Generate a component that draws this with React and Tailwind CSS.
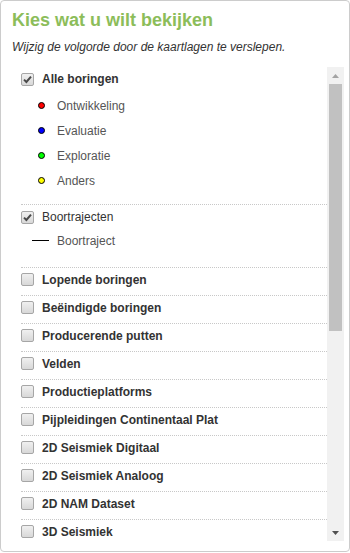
import React from "react";

function Checkbox({ checked }) {
  return (
    <span className="relative flex h-[13px] w-[13px] shrink-0 items-center justify-center rounded-[2px] border border-[#a6a6a6] bg-gradient-to-b from-[#f0f0f0] to-[#d8d8d8]">
      {checked && (
        <svg width="9" height="9" viewBox="0 0 9 9" className="block">
          <path d="M1 4.6 L3.4 7 L8 1.6" fill="none" stroke="#4a4a4a" strokeWidth="2" />
        </svg>
      )}
    </span>
  );
}

function Dot({ color }) {
  return <span className={`block h-[7px] w-[7px] shrink-0 rounded-full border border-black ${color}`} />;
}

const plain = [
  "Lopende boringen",
  "Beëindigde boringen",
  "Producerende putten",
  "Velden",
  "Productieplatforms",
  "Pijpleidingen Continentaal Plat",
  "2D Seismiek Digitaal",
  "2D Seismiek Analoog",
  "2D NAM Dataset",
  "3D Seismiek",
];

export default function App() {
  return (
    <div className="h-[552px] w-[350px] overflow-hidden rounded-[4px] border border-[#cccccc] bg-white pl-[11px] pr-[5px] pt-[9px] font-['Liberation_Sans',Arial,sans-serif]">
      <h1 className="text-[18px] font-bold leading-[20px] text-[#8cbd5a]">Kies wat u wilt bekijken</h1>
      <p className="mt-[9px] text-[12px] italic leading-[16px] text-[#333]">
        Wijzig de volgorde door de kaartlagen te verslepen.
      </p>
      <div className="mt-[12px] flex h-[474px]">
        <div className="h-full flex-1 overflow-hidden pl-[9px] pr-0">
          <ul className="w-full">
            <li>
              <div className="flex h-[23px] items-center gap-[8px] pt-[1px]">
                <Checkbox checked />
                <span className="text-[12px] font-bold text-[#333]">Alle boringen</span>
              </div>
              <ul className="mt-[3px] pb-[11px]">
                {[
                  ["Ontwikkeling", "bg-[#ff0000]"],
                  ["Evaluatie", "bg-[#0000ff]"],
                  ["Exploratie", "bg-[#00ff00]"],
                  ["Anders", "bg-[#ffff00]"],
                ].map(([t, c]) => (
                  <li key={t} className="flex h-[25px] items-center gap-[12px] pl-[17px]">
                    <Dot color={c} />
                    <span className="text-[12px] text-[#555]">{t}</span>
                  </li>
                ))}
              </ul>
            </li>
            <li className="border-t border-dotted border-[#c8c8c8] pb-[14px]">
              <div className="flex h-[23px] items-center gap-[8px] pt-[1px]">
                <Checkbox checked />
                <span className="text-[12px] text-[#333]">Boortrajecten</span>
              </div>
              <div className="flex h-[25px] items-center gap-[8px] pl-[11px]">
                <span className="block h-[1px] w-[17px] bg-black" />
                <span className="text-[12px] text-[#555]">Boortraject</span>
              </div>
            </li>
            {plain.map((t) => (
              <li key={t} className="flex h-[28px] items-center gap-[8px] border-t border-dotted border-[#c8c8c8] pb-[4px]">
                <Checkbox />
                <span className="whitespace-nowrap text-[12px] font-bold text-[#333]">{t}</span>
              </li>
            ))}
          </ul>
        </div>
        <div className="flex h-full w-[17px] shrink-0 flex-col bg-[#f1f1f1]">
          <div className="flex h-[17px] items-center justify-center">
            <svg width="7" height="4" viewBox="0 0 7 4" className="block">
              <path d="M3.5 0 L7 4 L0 4 Z" fill="#a3a3a3" />
            </svg>
          </div>
          <div className="mx-[2px] h-[247px] bg-[#c1c1c1]" />
          <div className="flex-1" />
          <div className="flex h-[17px] items-center justify-center">
            <svg width="7" height="4" viewBox="0 0 7 4" className="block">
              <path d="M0 0 L7 0 L3.5 4 Z" fill="#505050" />
            </svg>
          </div>
        </div>
      </div>
    </div>
  );
}
